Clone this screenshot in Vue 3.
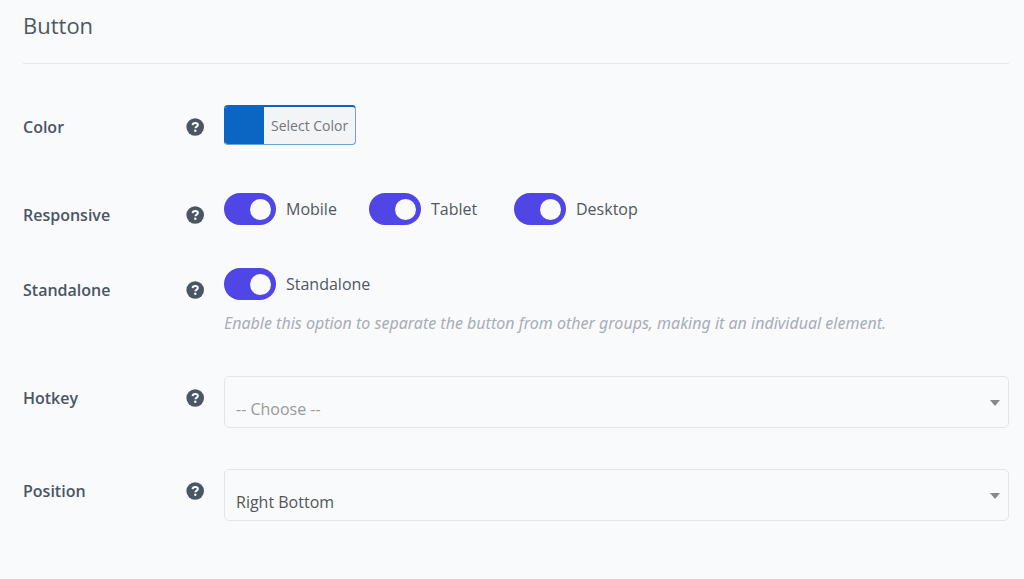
<script setup>
import { ref } from 'vue'

const devices = ref([
  { id: 'mobile', label: 'Mobile', on: true },
  { id: 'tablet', label: 'Tablet', on: true },
  { id: 'desktop', label: 'Desktop', on: true },
])
const standalone = ref(true)
const hotkey = ref('')
const position = ref('right-bottom')
const rows = [
  { id: 'color', label: 'Color' },
  { id: 'responsive', label: 'Responsive' },
  { id: 'standalone', label: 'Standalone' },
  { id: 'hotkey', label: 'Hotkey', target: 'hotkey-field' },
  { id: 'position', label: 'Position', target: 'position-field' },
]
</script>

<template>
  <main class="panel">
    <h2 class="title">Button</h2>
    <form class="rows" @submit.prevent>
      <div v-for="row in rows" :key="row.id" class="row">
        <div class="head">
          <label v-if="row.target" class="name" :for="row.target">{{ row.label }}</label>
          <span v-else :id="row.id + '-name'" class="name">{{ row.label }}</span>
          <button type="button" class="help" :aria-label="'Help: ' + row.label">
            <svg viewBox="0 0 18 18" width="18" height="18" aria-hidden="true">
              <circle cx="9.2" cy="9" r="8.8" fill="#4b5563" />
              <path d="M6.600 7.100C6.700 5.600 7.700 4.900 9.200 4.900c1.600 0 2.700.8 2.700 2.100 0 1.700-2.500 1.600-2.500 3.300" fill="none" stroke="#f9fafc" stroke-width="2" />
              <circle cx="9.300" cy="12.700" r="1.200" fill="#f9fafc" />
            </svg>
          </button>
        </div>

        <div v-if="row.id === 'color'" class="control">
          <button type="button" class="color" aria-describedby="color-name">
            <span class="swatch"></span>
            <span class="color-text">Select Color</span>
          </button>
        </div>

        <div v-else-if="row.id === 'responsive'" class="control devices" role="group" aria-labelledby="responsive-name">
          <label v-for="device in devices" :key="device.id" class="toggle">
            <input v-model="device.on" type="checkbox" class="switch" />
            <span>{{ device.label }}</span>
          </label>
        </div>

        <div v-else-if="row.id === 'standalone'" class="control" role="group" aria-labelledby="standalone-name">
          <label class="toggle">
            <input v-model="standalone" type="checkbox" class="switch" aria-describedby="standalone-hint" />
            <span>Standalone</span>
          </label>
          <p id="standalone-hint" class="hint">Enable this option to separate the button from other groups, making it an individual element.</p>
        </div>

        <div v-else-if="row.id === 'hotkey'" class="control select">
          <select id="hotkey-field" v-model="hotkey" class="field" :class="{ empty: !hotkey }">
            <option value="">-- Choose --</option>
          </select>
          <svg class="arrow" viewBox="0 0 10 6" width="10" height="6" aria-hidden="true"><path d="M0 0h10L5 6z" fill="#888" /></svg>
        </div>

        <div v-else class="control select">
          <select id="position-field" v-model="position" class="field">
            <option value="right-bottom">Right Bottom</option>
          </select>
          <svg class="arrow" viewBox="0 0 10 6" width="10" height="6" aria-hidden="true"><path d="M0 0h10L5 6z" fill="#888" /></svg>
        </div>
      </div>
    </form>
  </main>
</template>

<style>
body {
  background: #f9fafc;
}
</style>

<style scoped>
.panel {
  padding: 8px 15px 56px 23px;
  font-family: "Segoe UI", "Open Sans", "Noto Sans", sans-serif;
  font-size: 16px;
  line-height: 24px;
  color: #50575e;
}
.title {
  margin: 0;
  padding-bottom: 21px;
  border-bottom: 1px solid #e5e7eb;
  font-size: 22px;
  line-height: 34px;
  font-weight: 400;
}
.rows {
  display: flex;
  flex-direction: column;
  gap: 41px;
  padding-top: 41px;
}
.row {
  display: grid;
  grid-template-columns: 181px minmax(0, 1fr);
  column-gap: 20px;
  align-items: start;
}
.head {
  display: flex;
  justify-content: space-between;
  align-items: center;
  padding-top: 10px;
}
.name {
  color: #4b5563;
  font-weight: 600;
}
.help {
  display: flex;
  padding: 0;
  border: 0;
  background: none;
  cursor: pointer;
}
.color {
  display: flex;
  height: 40px;
  margin: 0 0 7px;
  padding: 0;
  border: 1px solid #6ba3d6;
  border-top: 2px solid #0a66c2;
  border-left-color: #0a66c2;
  border-radius: 4px;
  overflow: hidden;
  background: #f3f4f6;
  color: #72777c;
  font-family: inherit;
  font-size: 14px;
  line-height: 37px;
  cursor: pointer;
}
.swatch {
  width: 39px;
  height: 37px;
  background: #0a66c2;
}
.color-text {
  padding: 0 7px;
}
.devices {
  display: grid;
  grid-template-columns: repeat(3, 145px);
}
.toggle {
  display: flex;
  align-items: center;
  gap: 10px;
  height: 32px;
}
.switch {
  appearance: none;
  display: flex;
  align-items: center;
  flex: none;
  width: 52px;
  height: 32px;
  margin: 0;
  padding: 0 5px;
  border-radius: 16px;
  background: #d1d5db;
  cursor: pointer;
}
.switch::before {
  content: "";
  width: 21px;
  height: 21px;
  border-radius: 50%;
  background: #f9fafc;
}
.switch:checked {
  justify-content: flex-end;
  background: #4f46e5;
}
.hint {
  margin: 11px 0 0;
  color: #a7adb8;
  font-family: "Segoe UI", "Noto Sans", "Open Sans", sans-serif;
  font-style: italic;
}
.select {
  position: relative;
}
.field {
  appearance: none;
  display: block;
  width: 100%;
  height: 52px;
  padding: 14px 32px 0 11px;
  border: 1px solid #e2e6ec;
  border-radius: 5px;
  background: transparent;
  color: #555;
  font-family: inherit;
  font-size: 16px;
}
.field.empty {
  color: #999;
}
.arrow {
  position: absolute;
  top: 24px;
  right: 9px;
  pointer-events: none;
}
</style>
